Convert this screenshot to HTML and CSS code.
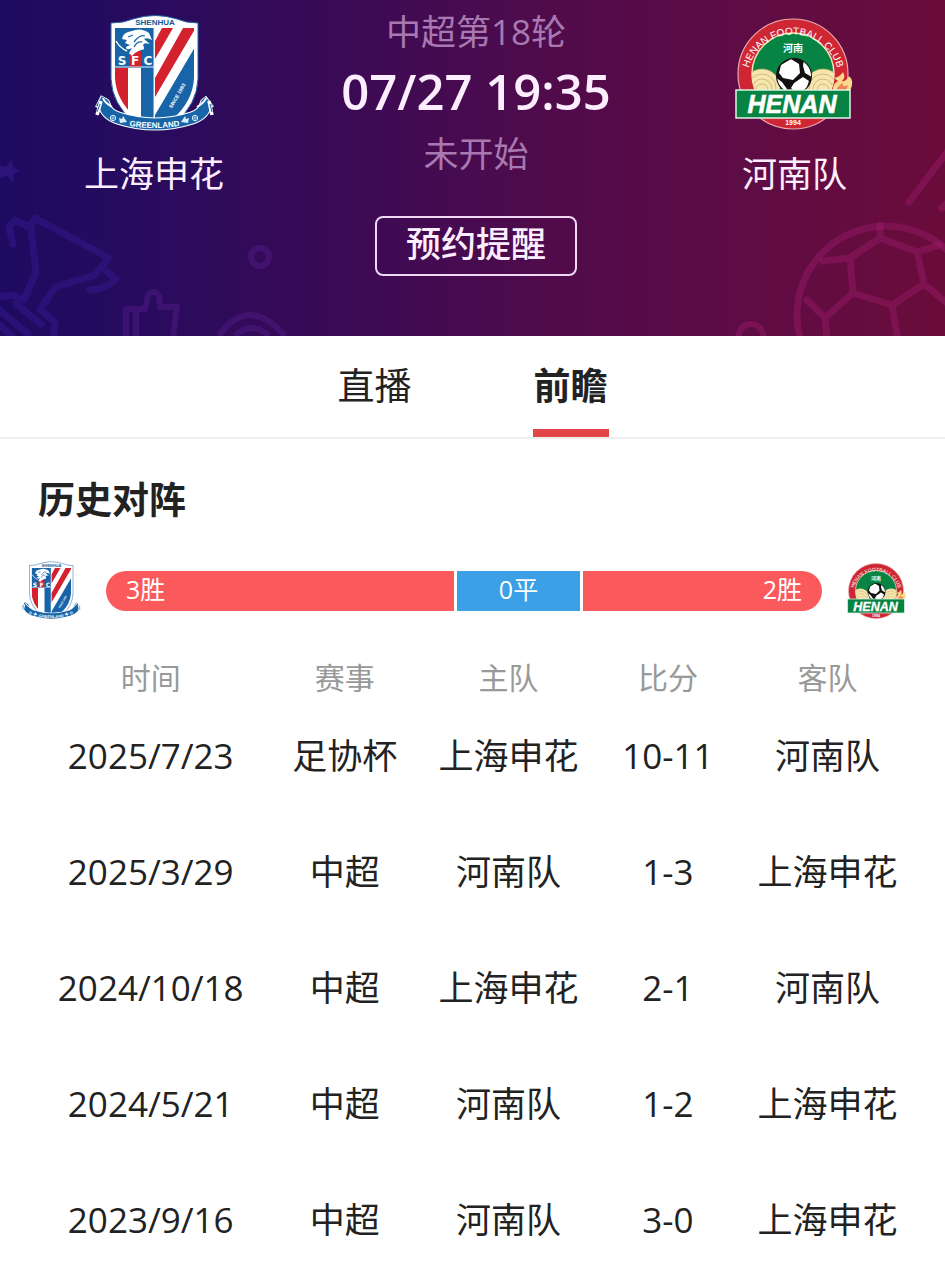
FILE: index.html
```html
<!DOCTYPE html>
<html lang="zh-CN">
<head>
<meta charset="utf-8">
<meta name="viewport" content="width=device-width, initial-scale=1">
<title>上海申花 - 河南队</title>
<link rel="stylesheet" href="styles.css">
</head>
<body>
<svg class="defs" aria-hidden="true">
  <defs>
    <clipPath id="shield-clip"><path d="M21 14H100V64Q99 86 80 104H42Q22 86 21 64Z"/></clipPath>
    <clipPath id="disc-clip"><circle cx="58" cy="60" r="41"/></clipPath>
    <clipPath id="ball-clip"><circle cx="59" cy="60" r="17"/></clipPath>
    <path id="ribbon-line" d="M20 109Q60 119 101 109"/>
    <path id="ring-line" d="M13 76A46 46 0 1 1 103 76"/>
  </defs>
  <symbol id="shenhua" viewBox="0 0 120 120">
    <path d="M17 9Q30 9 39 5Q61 -2 83 5Q92 9 104 9V65Q103 90 82 108H40Q18 90 17 65Z" fill="#fff" stroke="#2567a8" stroke-width="1"/>
    <text x="61" y="11" text-anchor="middle" font-size="8" font-weight="700" fill="#185896">SHENHUA</text>
    <g clip-path="url(#shield-clip)">
      <path d="M21 14H60V54H21Z" fill="#1864a8"/>
      <path d="M21 54H34V106H21ZM35 37H47V53H35Z" fill="#d3212d"/>
      <path d="M47 54H60V106H47ZM101 33V106H61V101Z" fill="#1864a8"/>
      <path d="M68 14H79L61 45V27ZM89 14H101V15L61 83V64Z" fill="#d3212d"/>
      <path d="M60 14V106M21 53H60" stroke="#e8f1fa" stroke-width="1"/>
    </g>
    <path d="M28 25Q29 18 38 17Q47 13 55 19L58 26Q53 23 50 25L56 30Q50 28 49 31Q52 36 47 36Q41 38 38 42L35 39L38 34Q32 37 32 33L36 31L31 29L33 26Z" fill="#fff"/>
    <path d="M34 23L39 21M40 28Q46 20 51 22M40 33Q43 27 48 28" fill="none" stroke="#1864a8" stroke-width="1.3"/>
    <path d="M22 27Q26 34 33 37" fill="none" stroke="#fff" stroke-width="1.5"/>
    <g class="initials" fill="#fff" font-size="12" font-weight="700" text-anchor="middle"><text x="28" y="51">S</text><text x="41" y="51">F</text><text x="54" y="51">C</text></g>
    <text x="75" y="94" font-size="5" font-weight="700" fill="#fff" transform="rotate(-60 77 92)">SINCE 1993</text>
    <g fill="none" stroke-linejoin="round">
      <path d="M4 87L10 90Q12 100 24 104Q61 116 98 104Q110 100 112 90L116 87" stroke="#fff" stroke-width="13"/>
      <path d="M5 87L10 90Q12 100 24 104Q61 116 98 104Q110 100 112 90L115 87" stroke="#1864a8" stroke-width="11"/>
      <path d="M18 93Q10 88 9 84M103 93Q111 88 112 84" stroke="#fff" stroke-width="2"/>
      <path d="M7 87L3 101M115 87L118 101" stroke="#fff" stroke-width="3.5"/>
      <path d="M6 90L3 98M116 90L118 98" stroke="#1864a8"/>
    </g>
    <g fill="none" stroke="#d9edf9"><circle cx="19" cy="104" r="2.7"/><circle cx="101" cy="104" r="2.7"/><path d="M16 104H22M19 101V107M98 104H104M101 101V107" stroke-width=".7"/></g>
    <path d="M26 109L25 104L28 105L29 102L33 108ZM94 109L95 104L92 105L91 102L87 108Z" fill="#d9edf9"/>
    <text font-size="8" font-weight="700" fill="#fff" text-anchor="middle"><textPath href="#ribbon-line" startOffset="50%">GREENLAND</textPath></text>
  </symbol>
  <symbol id="henan" viewBox="0 0 120 120">
    <circle cx="58" cy="60" r="55" fill="#cf2634" stroke="#eba9b0" stroke-width="1.2"/>
    <circle cx="58" cy="60" r="41" fill="#078443" stroke="#f3e4b2" stroke-width="1.5"/>
    <text font-size="10" fill="#fff" text-anchor="middle"><textPath href="#ring-line" startOffset="50%">HENAN FOOTBALL CLUB</textPath></text>
    <text x="58" y="38" text-anchor="middle" font-size="10" font-weight="700" fill="#fff">河南</text>
    <g clip-path="url(#disc-clip)" fill="#f6e6ae" stroke="#b79a50" stroke-width=".6">
      <circle cx="27" cy="73" r="18"/><circle cx="27" cy="74" r="14"/><circle cx="27" cy="75" r="10"/><circle cx="27" cy="76" r="6"/>
      <circle cx="88" cy="73" r="18"/><circle cx="88" cy="74" r="14"/><circle cx="88" cy="75" r="10"/><circle cx="88" cy="76" r="6"/>
    </g>
    <circle cx="59" cy="62" r="18" fill="#111"/>
    <g transform="translate(0 2)"><g clip-path="url(#ball-clip)" fill="#fff">
      <path d="M46 49L56 43L64 48L65 57L58 64L48 62L44 57ZM69 43L78 53L77 61L70 57L68 50ZM40 61L47 66L52 73L45 77ZM59 67L68 61L74 65L71 74L62 78L56 72Z"/>
    </g></g>
    <path d="M98 77Q97 70 103 67L99 64Q105 63 108 58Q111 64 107 67Q111 68 114 62Q120 67 115 77Z" fill="#f8d98b"/>
    <path d="M101 77Q103 71 108 69Q107 74 113 71L111 77Z" fill="#ee8455"/>
    <path d="M1 76H115V104H1Z" fill="#078443" stroke="#dff2e5" stroke-width="1.5"/>
    <text x="57" y="99" text-anchor="middle" font-size="25" font-weight="700" font-style="italic" fill="#fff" stroke="#fff" stroke-width=".6">HENAN</text>
    <text x="58" y="111" text-anchor="middle" font-size="7" font-weight="700" fill="#fff">1994</text>
  </symbol>
</svg>

<header class="match">
  <svg class="decor decor-left" viewBox="0 0 300 190" aria-hidden="true">
    <g fill="none" stroke="#3d1b9b" stroke-opacity=".4" stroke-width="7" stroke-linejoin="round" stroke-linecap="round">
      <path d="M13 98L9 80L15 74L29 81L35 72L109 112L93 130L55 141L40 164L55 176L53 192M31 83L36 126L24 154L12 149L-2 151M106 125L116 133Q107 143 90 144M-2 163L28 188M16 158L41 178M-2 178L12 190"/>
    </g>
    <path d="M12 13L13 21L20 25L13 28L14 37L7 30L-4 33V19L6 21Z" fill="#3b1996" fill-opacity=".5"/>
    <g fill="none" stroke="#5b1d91" stroke-opacity=".4" stroke-width="6" stroke-linejoin="round">
      <path d="M126 192V163H145L148 150Q153 142 159 150L160 161H177L173 192M136 165V192"/>
      <circle cx="260" cy="111" r="9"/>
      <path d="M219 190Q248 148 285 190M235 190Q251 174 269 190"/>
    </g>
  </svg>
  <svg class="decor decor-right" viewBox="0 0 220 190" aria-hidden="true">
    <g fill="none" stroke="#a01b70" stroke-opacity=".4" stroke-width="7" stroke-linejoin="round" stroke-linecap="round">
      <circle cx="161" cy="169" r="89"/>
      <path d="M155 79V92L125 112L98 115M155 92L192 106L215 99M192 106L199 138L167 159L128 147L125 112M199 138L222 157M128 147L100 172L82 154M167 159L173 194M100 172L102 194"/>
      <path d="M184 56L222 6M217 62L224 55"/>
      <path d="M13 192Q15 178 26 178Q37 178 39 192" stroke-width="6"/>
    </g>
  </svg>
  <div class="team">
    <svg class="crest" role="img" aria-label="上海申花队徽"><use href="#shenhua"/></svg>
    <span class="team-name">上海申花</span>
  </div>
  <div class="info">
    <span class="round">中超第18轮</span>
    <time class="kickoff" datetime="2025-07-27T19:35">07/27 19:35</time>
    <span class="status">未开始</span>
    <button class="remind" type="button">预约提醒</button>
  </div>
  <div class="team">
    <svg class="crest" role="img" aria-label="河南队队徽"><use href="#henan"/></svg>
    <span class="team-name">河南队</span>
  </div>
</header>

<nav class="tabs">
  <button class="tab" type="button">直播</button>
  <button class="tab active" type="button" aria-current="page">前瞻</button>
</nav>

<main>
  <h1 class="title">历史对阵</h1>
  <div class="versus">
    <svg class="mini-crest" aria-hidden="true"><use href="#shenhua"/></svg>
    <div class="bar">
      <span class="segment home">3胜</span>
      <span class="segment draw">0平</span>
      <span class="segment away">2胜</span>
    </div>
    <svg class="mini-crest" aria-hidden="true"><use href="#henan"/></svg>
  </div>
  <div class="history">
    <table class="results">
      <colgroup><col class="c-date"><col class="c-event"><col class="c-home"><col class="c-score"><col class="c-away"></colgroup>
      <thead><tr><th scope="col">时间</th><th scope="col">赛事</th><th scope="col">主队</th><th scope="col">比分</th><th scope="col">客队</th></tr></thead>
      <tbody>
        <tr><td>2025/7/23</td><td>足协杯</td><td>上海申花</td><td>10-11</td><td>河南队</td></tr>
        <tr><td>2025/3/29</td><td>中超</td><td>河南队</td><td>1-3</td><td>上海申花</td></tr>
        <tr><td>2024/10/18</td><td>中超</td><td>上海申花</td><td>2-1</td><td>河南队</td></tr>
        <tr><td>2024/5/21</td><td>中超</td><td>河南队</td><td>1-2</td><td>上海申花</td></tr>
        <tr><td>2023/9/16</td><td>中超</td><td>河南队</td><td>3-0</td><td>上海申花</td></tr>
      </tbody>
    </table>
  </div>
</main>
</body>
</html>
```
FILE: styles.css
```css
* { box-sizing: border-box; }

body {
  margin: 0;
  background: #fff;
  color: #222;
  font-family: "Open Sans", "Noto Sans CJK SC", sans-serif;
  font-size: 35px;
}

button {
  font: inherit;
  color: inherit;
  background: none;
  border: 0;
  padding: 0;
  cursor: pointer;
}

.defs { position: absolute; width: 0; height: 0; }

svg text { font-family: "Liberation Sans", "Noto Sans CJK SC", sans-serif; }
svg .initials text { font-family: "DejaVu Sans", sans-serif; }

.match {
  position: relative;
  overflow: hidden;
  display: grid;
  grid-template-columns: 308fr 336fr 301fr;
  padding: 8px 0 60px;
  color: #fdeeff;
  background: linear-gradient(90deg, #1c0b60 0%, #290b5e 16%, #3a0a55 36%, #500b4b 58%, #5f0c44 80%, #6a0c3a 100%);
}

.decor { position: absolute; bottom: 0; height: 190px; }
.decor-left { left: 0; width: 300px; }
.decor-right { right: 0; width: 220px; }

.team, .info {
  position: relative;
  display: flex;
  flex-direction: column;
  align-items: center;
}

.team { padding-top: 6px; }
.crest { width: 120px; height: 120px; }
.team-name { margin-top: 14px; line-height: 52px; }

.round, .status { line-height: 48px; color: #a779b0; }
.kickoff { font-size: 49px; font-weight: 600; line-height: 70px; }
.status { margin-top: 4px; }

.remind {
  margin-top: 38px;
  width: 202px;
  height: 60px;
  padding-bottom: 4px;
  border: 2px solid #eed8f2;
  border-radius: 8px;
  font-weight: 500;
  line-height: 52px;
}

.tabs {
  display: flex;
  justify-content: center;
  gap: 120px;
  border-bottom: 2px solid #eee;
}

.tab {
  width: 76px;
  padding: 22px 0 15px;
  border-bottom: 8px solid transparent;
  font-size: 37px;
  line-height: 56px;
  white-space: nowrap;
}

.tab.active { font-weight: 700; border-color: #e34648; }

.title {
  margin: 0;
  padding: 34px 38px 0;
  font-size: 37px;
  font-weight: 700;
  line-height: 54px;
}

.versus {
  display: flex;
  align-items: center;
  gap: 25px;
  padding: 34px 38px 0 21px;
}

.mini-crest { flex: none; width: 60px; height: 60px; }

.bar {
  flex: 1;
  display: grid;
  grid-template-columns: 348fr 123fr 239fr;
  gap: 3px;
  overflow: hidden;
  border-radius: 20px;
  color: #fff;
  font-size: 25px;
  line-height: 36px;
}

.segment { height: 40px; padding: 0 20px; background: #fb5a5c; }
.draw { background: #3ba0e6; text-align: center; }
.away { text-align: right; }

.history { padding: 37px 40px 0 43px; }

.results {
  width: 100%;
  table-layout: fixed;
  border-collapse: collapse;
  text-align: center;
  white-space: nowrap;
}

.c-date { width: 25%; }
.c-event { width: 20%; }
.c-home { width: 18%; }
.c-score { width: 19%; }
.c-away { width: 18%; }

.results th {
  padding: 0;
  color: #999;
  font-size: 30px;
  font-weight: 400;
  line-height: 40px;
}

.results td { padding: 32px 0; line-height: 52px; }
.results tr:last-child td { padding-bottom: 20px; }
```
